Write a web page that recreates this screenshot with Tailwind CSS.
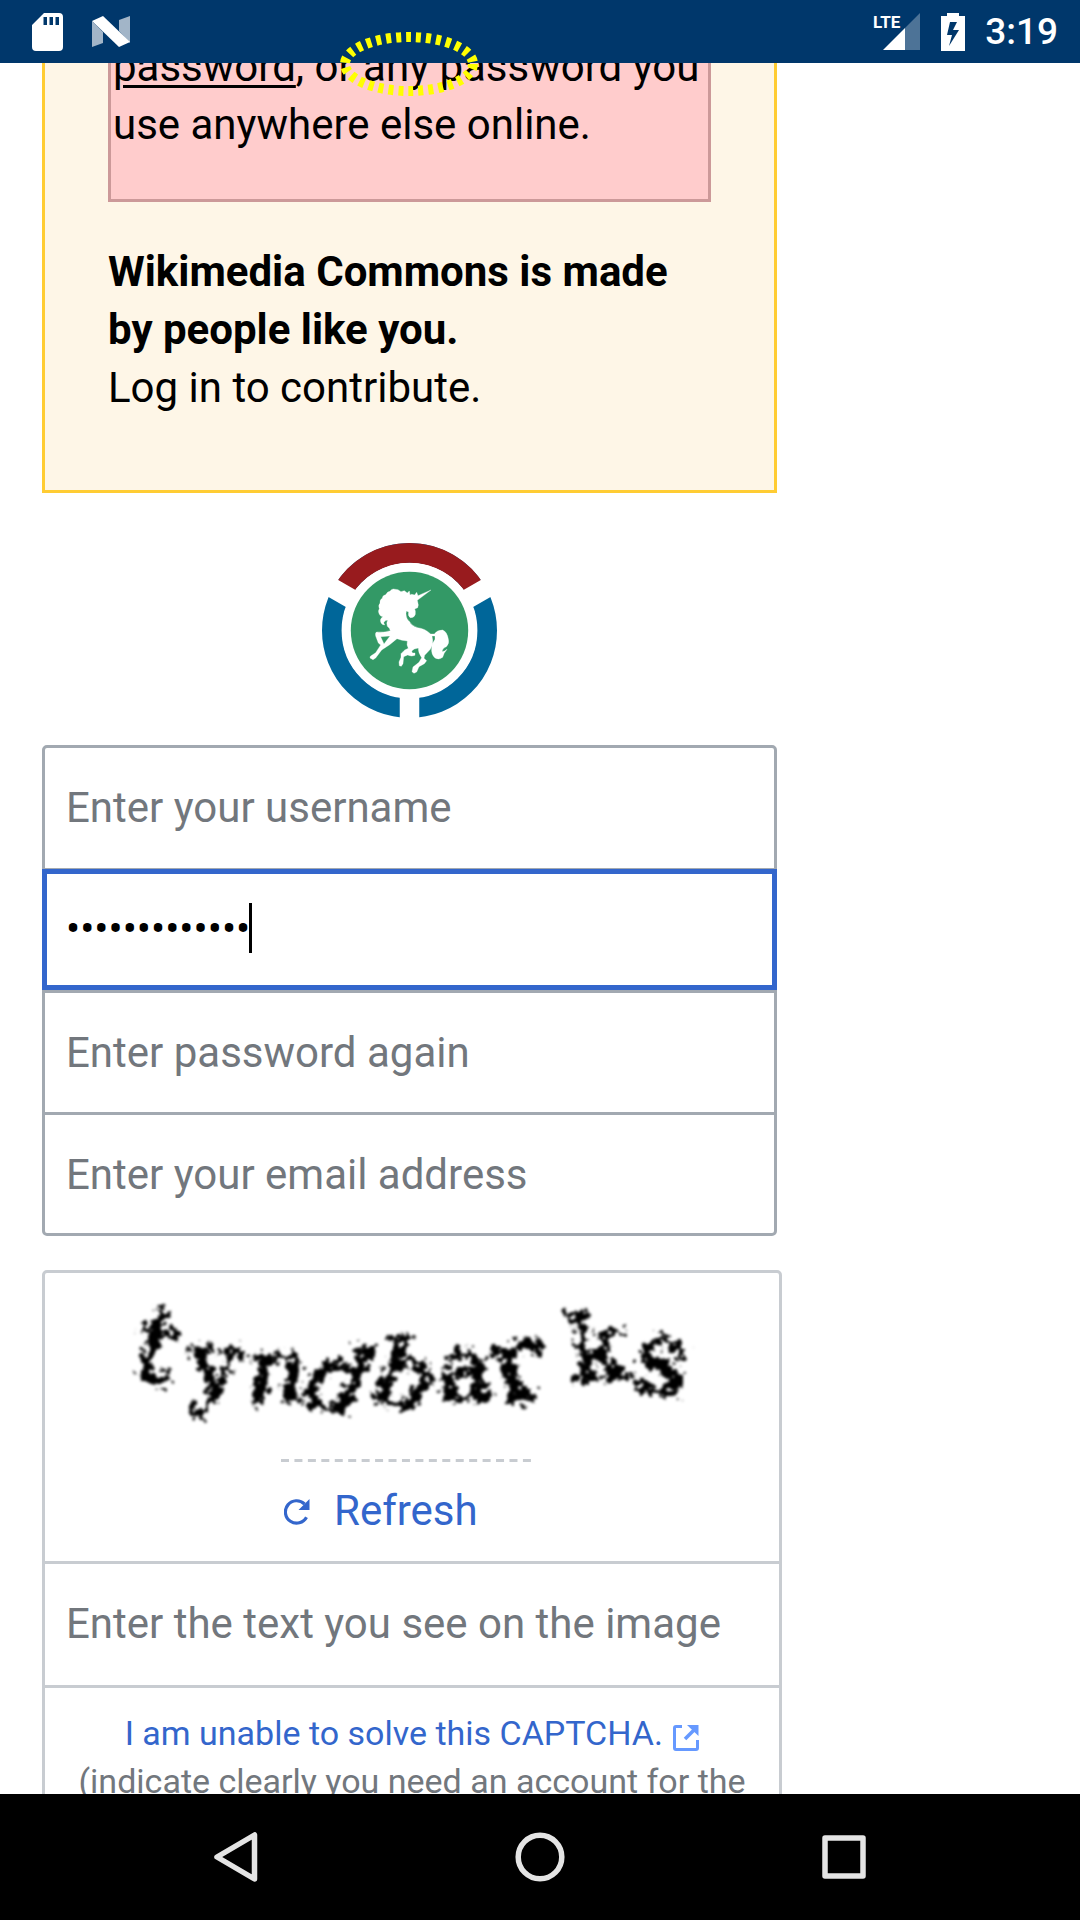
<!DOCTYPE html>
<html lang="en">
<head>
<meta charset="utf-8">
<meta name="viewport" content="width=device-width, initial-scale=1">
<title>Create account - Wikimedia Commons</title>
<script src="https://cdn.jsdelivr.net/npm/@tailwindcss/browser@4"></script>
</head>
<body class="flex h-screen flex-col overflow-hidden bg-white font-[Roboto,sans-serif] text-[42px] leading-[58px] text-black">

<header class="flex h-[63px] shrink-0 items-center justify-between bg-[#00376b] pr-[22px] pl-8 text-white">
  <div class="flex items-center gap-7">
    <svg class="h-[38px] w-8" viewBox="0 0 32 38" aria-label="SD card"><path fill="#fff" fill-rule="evenodd" d="M12 0H27Q31 0 31 4V34Q31 38 27 38H4Q0 38 0 34V12ZM11.500 4V12H15V4ZM17.500 4V12H21V4ZM23.500 4V12H27V4Z"/></svg>
    <svg class="h-8 w-[38px]" viewBox="0 0 38 32" aria-label="Android N"><path fill="#a2b5c8" d="M0 5L11 16V27L0 31ZM27 4L38 0V27L27 15Z"/><path fill="#fff" d="M0 5L11 0L38 26L27 31Z"/></svg>
  </div>
  <div class="flex items-center gap-5">
    <div class="flex items-center gap-[21px]">
      <svg class="h-[38px] w-[46px] overflow-visible" viewBox="0 0 46 38" aria-label="LTE signal"><path fill="#4d7397" d="M46 0V37H31V15Z"/><path fill="#fff" d="M31 15V37H9Z"/><path fill="#00376b" d="M0 0H27V18H0Z"/><text x="-1" y="15" fill="#fff" font-family="Roboto" font-weight="700" font-size="17">LTE</text></svg>
      <svg class="h-[38px] w-6" viewBox="0 0 24 38" aria-label="Battery charging"><path fill="#fff" fill-rule="evenodd" d="M6 0H18V3H24V38H0V3H6ZM9 9L6 22H11L8 33L18 17H12L16 9Z"/></svg>
    </div>
    <time class="text-[37px] leading-[63px] font-medium">3:19</time>
  </div>
</header>

<main class="min-h-0 flex-1 overflow-hidden pl-[42px]">
  <section class="relative -mt-[25px] w-full max-w-[735px] border-x-[3px] border-b-[3px] border-[#fc3] bg-[#fef6e7] px-[63px] pb-[73px]">
    <p class="border-x-[3px] border-b-[3px] border-[#c99] bg-[#fcc] pb-[45px] pl-[2px] whitespace-nowrap"><a href="#" class="underline decoration-[3px] underline-offset-[4px]">password</a>, or any password you<br>use anywhere else online.</p>
    <p class="mt-[41px]"><strong class="font-bold">Wikimedia Commons is made<br>by people like you.</strong><br>Log in to contribute.</p>
  </section>

  <form class="w-full max-w-[735px]">
    <svg class="mx-auto mt-[50px] block size-[175px]" viewBox="0 0 175 175" role="img" aria-label="Wikimedia Commons">
      <circle cx="87.500" cy="87.500" r="77.700" fill="none" stroke="#069" stroke-width="19.600"/>
      <path d="M20.200 48.700A77.700 77.700 0 0 1 154.800 48.700" fill="none" stroke="#981b1e" stroke-width="19.600"/>
      <path d="M87.500 87.500V180M89.100 90.300L0 38.900M85.900 90.300L175 38.900" stroke="#fff" stroke-width="19.500"/>
      <circle cx="87.500" cy="87.500" r="67.500" fill="#fff"/>
      <circle cx="87.500" cy="87.500" r="58.700" fill="#396"/>
      <path transform="translate(33 33) scale(.3333)" fill="#fff" fill-rule="evenodd" stroke="#fff" stroke-width="1" stroke-linejoin="round" d="M228 42L189 59L185 49L179 57L170 55L165 57L163 45L157 51L148 44L138 47L129 41L115 39Q108 40 105 46Q98 46 92 56Q82 58 82 67Q74 70 75 82Q69 88 73 98Q68 105 73 115Q76 122 84 122Q74 127 77 138Q80 147 89 147L86 140Q89 133 98 132Q93 142 97 151L103 157L106 164Q85 170 65 168Q60 170 62 180L70 201L77 207L62 230L46 241L45 246L54 251L62 246L80 222L104 206L126 188Q140 194 157 195Q154 206 160 217Q145 222 138 233L138 244L132 258L133 269L139 271L144 263L146 242L158 237Q170 243 180 238L180 231Q168 232 171 224Q176 218 190 216Q190 232 200 245L192 259L174 273L171 287L177 292L185 288L192 272L208 263L215 254L207 247L209 238L226 220Q237 202 231 180L240 180L240 190Q230 203 230 216Q228 235 240 246Q252 253 263 244Q265 233 276 220Q268 228 261 226Q263 216 274 212Q284 203 280 189Q276 167 263 162Q246 162 238 174L227 174Q211 158 188 155Q169 149 164 137Q153 129 153 113L154 105L161 108Q158 121 166 125Q178 126 181 115Q183 106 179 99L188 95L190 87L187 73ZM77 182L105 180L87 204Z"/>
    </svg>

    <div class="mt-[27px] flex flex-col">
      <input type="text" aria-label="Username" placeholder="Enter your username" class="block h-[124px] w-full rounded-t-[5px] border-x-[3px] border-t-[3px] border-b border-[#a2a9b1] px-[21px] pb-[2px] placeholder:text-[#72777d]">
      <div class="relative">
        <input type="password" aria-label="Password" value="wikicommons12" class="block h-[121px] w-full border-[5px] border-[#36c] bg-white px-[19px] pb-[3px] caret-transparent outline-none">
        <span class="absolute top-[34px] left-[207px] h-[50px] w-[3px] bg-black"></span>
      </div>
      <input type="password" aria-label="Confirm password" placeholder="Enter password again" class="block h-[125px] w-full border-[3px] border-[#a2a9b1] px-[21px] placeholder:text-[#72777d]">
      <input type="email" aria-label="Email address" placeholder="Enter your email address" class="-mt-[3px] block h-[124px] w-full rounded-b-[5px] border-[3px] border-[#a2a9b1] px-[21px] placeholder:text-[#72777d]">
    </div>

    <fieldset class="mt-[34px] -mr-[5px] rounded-t-[5px] border-[3px] border-[#c8ccd1]">
      <svg class="block h-[186px] w-full" viewBox="0 0 734 186" role="img" aria-label="CAPTCHA image">
        <defs><filter id="rough" x="-5%" y="-20%" width="110%" height="140%"><feTurbulence type="fractalNoise" baseFrequency="0.13" numOctaves="3" seed="4" result="n"/><feDisplacementMap in="SourceGraphic" in2="n" scale="25" xChannelSelector="R" yChannelSelector="G"/><feGaussianBlur stdDeviation="1.4"/></filter></defs>
        <g filter="url(#rough)" font-family="DejaVu Serif" font-size="92" stroke="#000" stroke-width="3">
          <text transform="translate(82 102) rotate(16)" font-size="104">t</text>
          <text transform="translate(143 122) rotate(2)">y</text>
          <text transform="translate(202 129)" font-style="italic">n</text>
          <text transform="translate(258 130) rotate(14)" font-style="italic">d</text>
          <text transform="translate(325 128) rotate(12)" font-style="italic">b</text>
          <text transform="translate(394 128) rotate(-2)">a</text>
          <text transform="translate(456 133) rotate(-14)" font-size="108">r</text>
          <text transform="translate(528 110) rotate(-6)">k</text>
          <text transform="translate(586 117) rotate(8)" font-size="104">s</text>
        </g>
      </svg>
      <div class="flex justify-center pr-3">
        <button type="button" class="w-[250px] pb-[21px] text-left text-[#36c]">
          <svg class="block h-[3px] w-full" viewBox="0 0 250 3"><path d="M0 1.500H250" stroke="#c8ccd1" stroke-width="3" stroke-dasharray="8 5.440"/></svg>
          <span class="mt-5 flex items-center gap-6 pl-[3px]">
            <svg class="mt-[2px] size-[26px]" viewBox="0 0 26 26"><path d="M22.500 18.200A11.200 11.200 0 1 1 20.500 5" fill="none" stroke="#36c" stroke-width="3.200"/><path fill="#36c" d="M25.500 0V11H14.500Z"/></svg>
            Refresh
          </span>
        </button>
      </div>
      <input type="text" aria-label="CAPTCHA text" placeholder="Enter the text you see on the image" class="block h-[127px] w-full border-y-[3px] border-[#c8ccd1] px-[21px] pb-[2px] placeholder:text-[#72777d]">
      <p class="px-5 pt-[21px] pb-6 text-center text-[34px] leading-[48px] text-[#72777d]"><a href="#" class="text-[#36c]">I am unable to solve this CAPTCHA. <svg class="ml-[2px] inline-block size-[26px] align-[-6px]" viewBox="0 0 26 26"><path d="M9 1.500H3Q1.500 1.500 1.500 3V23Q1.500 24.500 3 24.500H23Q24.500 24.500 24.500 23V15" fill="none" stroke="#69f" stroke-width="3"/><path d="M12 14L21 5" stroke="#69f" stroke-width="3.500"/><path fill="#69f" d="M14 0H25.500V11Z"/></svg></a><br>(indicate clearly you need an account for the</p>
    </fieldset>
  </form>
</main>

<svg class="pointer-events-none absolute top-8 left-[339px] h-16 w-[140px]" viewBox="0 0 140 64" aria-hidden="true"><ellipse cx="70" cy="32" rx="64" ry="27" fill="none" stroke="#ff0" stroke-width="10" stroke-dasharray="5 5"/></svg>

<nav class="z-20 h-[126px] shrink-0 bg-black">
  <div class="mx-auto grid h-full max-w-[912px] grid-cols-3">
    <button class="flex items-center justify-center" aria-label="Back"><svg class="size-[52px]" viewBox="0 0 52 52" fill="none" stroke="#e4e4e4" stroke-width="5.500" stroke-linejoin="round"><path d="M44.500 4V48L7 26Z"/></svg></button>
    <button class="flex items-center justify-center" aria-label="Home"><svg class="size-[52px]" viewBox="0 0 52 52" fill="none" stroke="#e4e4e4" stroke-width="5.500"><circle cx="26" cy="26" r="21.800"/></svg></button>
    <button class="flex items-center justify-center" aria-label="Recent apps"><svg class="size-[52px]" viewBox="0 0 52 52" fill="none" stroke="#e4e4e4" stroke-width="5.500" stroke-linejoin="round"><path d="M7 7H45V45H7Z"/></svg></button>
  </div>
</nav>
</body>
</html>
